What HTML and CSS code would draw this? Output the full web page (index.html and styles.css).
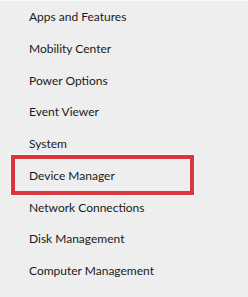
FILE: index.html
```html
<!DOCTYPE html>
<html>
<head>
<meta charset="utf-8">
<link rel="stylesheet" href="styles.css">
</head>
<body>
<ul class="menu">
  <li class="item">Apps and Features</li>
  <li class="item">Mobility Center</li>
  <li class="item">Power Options</li>
  <li class="item">Event Viewer</li>
  <li class="item">System</li>
  <li class="item item-highlight">Device Manager</li>
  <li class="item">Network Connections</li>
  <li class="item">Disk Management</li>
  <li class="item">Computer Management</li>
</ul>
</body>
</html>
```
FILE: styles.css
```css
html, body {
  margin: 0;
  padding: 0;
}
body {
  width: 248px;
  height: 297px;
  background: #eeeeee;
  border-top: 1px solid #fafafa;
  box-sizing: border-box;
  overflow: hidden;
  font-family: "Lato", "Noto Sans", sans-serif;
  color: #1a1a1a;
}
.menu {
  list-style: none;
  margin: 0;
  padding: 0;
  display: flex;
  flex-direction: column;
}
.item {
  position: relative;
  height: 31.75px;
  line-height: 31.75px;
  padding-left: 29px;
  font-size: 12px;
  white-space: nowrap;
}
.item-highlight::after {
  content: "";
  position: absolute;
  left: 11px;
  top: -5px;
  width: 183px;
  height: 40px;
  box-sizing: border-box;
  border: 4px solid #d9363e;
  box-shadow: 0 0 0 1px rgba(255,255,255,0.6);
}
```
